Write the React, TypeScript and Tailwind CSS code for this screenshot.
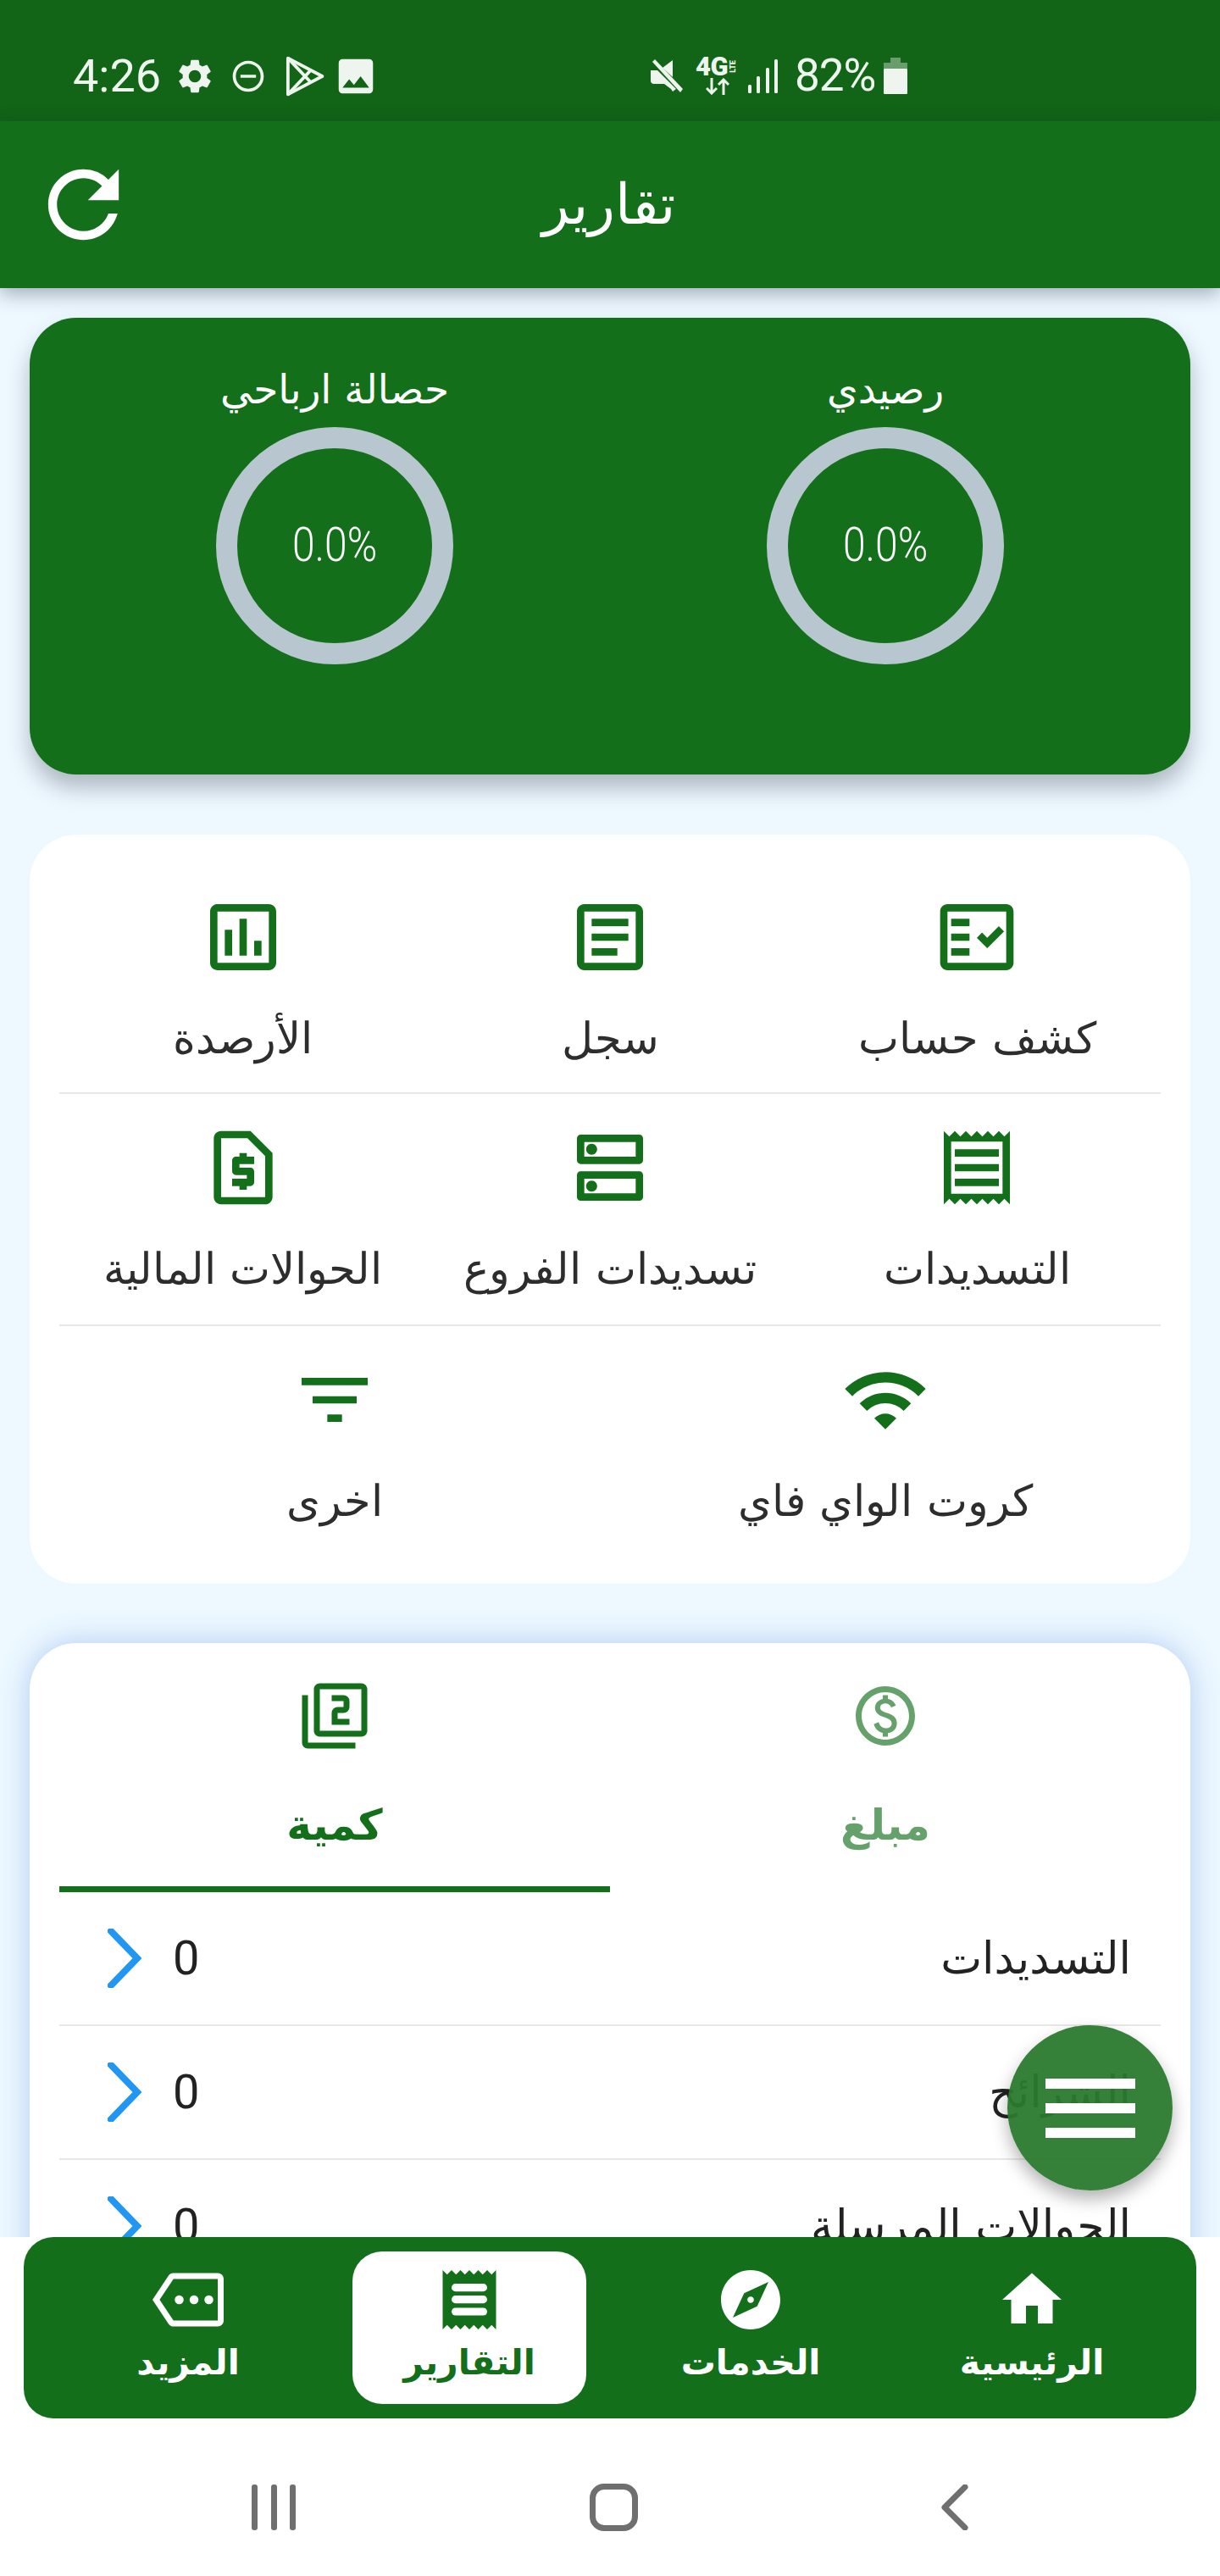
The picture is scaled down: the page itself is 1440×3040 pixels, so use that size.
import {
  MdRefresh,
  MdSettings,
  MdOutlineDoNotDisturbOn,
  MdImage,
  MdOutlineFactCheck,
  MdOutlineArticle,
  MdOutlineAssessment,
  MdOutlineReceipt,
  MdOutlineDns,
  MdOutlineRequestPage,
  MdWifi,
  MdFilterList,
  MdOutlinePaid,
  MdOutlineFilter2,
  MdHome,
  MdExplore,
  MdOutlineMore,
} from 'react-icons/md'

const services = [
  { label: 'كشف حساب', Icon: MdOutlineFactCheck },
  { label: 'سجل', Icon: MdOutlineArticle },
  { label: 'الأرصدة', Icon: MdOutlineAssessment },
  { label: 'التسديدات', Icon: MdOutlineReceipt },
  { label: 'تسديدات الفروع', Icon: MdOutlineDns },
  { label: 'الحوالات المالية', Icon: MdOutlineRequestPage },
]

const rows = ['التسديدات', 'الشرائح', 'الحوالات المرسلة']

// receipt with thick rounded bars, the md one is too thin here
function ReceiptIcon({ size }: { size: number }) {
  return (
    <svg viewBox="0 0 24 24" width={size} height={size} fill="currentColor">
      <path d="M3 22l1.5-1.5L6 22l1.5-1.5L9 22l1.5-1.5L12 22l1.5-1.5L15 22l1.5-1.5L18 22l1.5-1.5L21 22V2l-1.5 1.5L18 2l-1.5 1.5L15 2l-1.5 1.5L12 2l-1.5 1.5L9 2 7.5 3.5 6 2 4.5 3.5 3 2v20z" />
      <rect x="6" y="6.6" width="12" height="2.6" rx="1.3" fill="#fff" />
      <rect x="6" y="10.6" width="12" height="2.6" rx="1.3" fill="#fff" />
      <rect x="6" y="14.7" width="12" height="2.6" rx="1.3" fill="#fff" />
    </svg>
  )
}

function StatusBar() {
  return (
    <div dir="ltr" className="h-[143px] bg-[#126417] flex items-center pt-[36px] pl-[86px] text-[#eef5ee] font-['Roboto',sans-serif]">
      <span className="text-[54px] leading-none w-[120px]">4:26</span>
      <MdSettings size={48} />
      <MdOutlineDoNotDisturbOn size={44} className="ml-[17px]" />
      <svg viewBox="0 0 24 24" className="w-[54px] h-[54px] ml-[17px]" fill="none" stroke="currentColor" strokeWidth="1.7" strokeLinejoin="round">
        <path d="M3.5 2.5L21.5 12L3.5 21.5Z" />
        <path d="M3.5 2.5L15.5 15.2M3.5 21.5L15.5 8.8" />
      </svg>
      <MdImage size={54} className="ml-[7px]" />
      <svg viewBox="0 0 38 40" className="w-[38px] h-[40px] ml-[321px]" fill="currentColor">
        <path d="M0 13h8L30 35 26 38 24 35 16 29H4q-4 0-4-4Z" />
        <path d="M2 3l3-3 33 35-3 4Z" />
        <path d="M26 1v20L14 10Z" />
      </svg>
      <div className="relative w-[52px] h-[44px] ml-[15px] font-black">
        <span className="absolute left-0 top-[-4px] text-[31px] leading-[30px] tracking-[-0.5px]">4G</span>
        <span className="absolute left-[37px] top-[6px] text-[9px] leading-[9px] origin-center -rotate-90">LTE</span>
        <svg viewBox="0 0 28 20" className="absolute left-[12px] top-[24px] w-[28px] h-[20px]" fill="none" stroke="currentColor" strokeWidth="3">
          <path d="M7 0v18M1 12l6 6 6-6M21 20V2M15 8l6-6 6 6" />
        </svg>
      </div>
      <svg viewBox="0 0 35 40" className="w-[35px] h-[40px] ml-[10px]" fill="currentColor">
        <rect x="0" y="30" width="4" height="10" rx="1.5" />
        <rect x="10" y="20" width="4" height="20" rx="1.5" />
        <rect x="21" y="10" width="4" height="30" rx="1.5" />
        <rect x="31" y="0" width="4" height="40" rx="1.5" />
      </svg>
      <span className="text-[53px] leading-none ml-[20px] w-[105px] tracking-[-1px]">82%</span>
      <svg viewBox="0 0 28 43" className="w-[28px] h-[43px]">
        <path d="M8 0h12v6h8v7H0V6h8Z" fill="#eef5ee" opacity="0.4" />
        <rect x="0" y="13" width="28" height="30" rx="1" fill="#eef5ee" />
      </svg>
    </div>
  )
}

function AppBar() {
  return (
    <div className="relative z-10 h-[197px] bg-[#146f1b] shadow-[0_6px_22px_rgba(30,40,60,0.38)] flex items-center justify-center text-white">
      <MdRefresh size={125} className="absolute left-[36px] top-[36px]" />
      <h1 className="text-[66px] leading-none font-light mr-[4px]">تقارير</h1>
    </div>
  )
}

function Ring({ label }: { label: string }) {
  return (
    <div className="flex flex-col items-center">
      <div className="h-[90px] flex items-center text-[47px] leading-none">{label}</div>
      <div className="w-[280px] h-[280px] rounded-full border-[25px] border-[#b8c7cf] flex items-center justify-center">
        <span dir="ltr" className="font-['Roboto',sans-serif] font-light text-[48px] leading-none scale-y-[1.15]">0.0%</span>
      </div>
    </div>
  )
}

function BalanceCard() {
  return (
    <div className="h-[539px] rounded-[55px] bg-[#146f1b] text-white px-[35px] pt-[39px] grid grid-cols-2 items-start shadow-[0_16px_26px_rgba(60,70,80,0.35)]">
      <Ring label="رصيدي" />
      <Ring label="حصالة ارباحي" />
    </div>
  )
}

function ServiceItem({ label, Icon }: { label: string; Icon: typeof MdWifi }) {
  return (
    <div className="flex flex-col items-center pt-[35px]">
      <Icon size={104} className="text-[#146f1b]" />
      <div className="mt-[32px] h-[70px] flex items-center text-[51px] leading-none text-[#2d2d2d] font-light whitespace-nowrap">{label}</div>
    </div>
  )
}

function ServicesCard() {
  return (
    <div className="h-[884px] rounded-[55px] bg-white px-[35px] pt-[2px] mt-[71px]">
      <div className="grid grid-cols-3 h-[304px] pt-[32px] border-b-2 border-[#e8e8e8]">
        {services.slice(0, 3).map((s) => (
          <ServiceItem key={s.label} {...s} />
        ))}
      </div>
      <div className="grid grid-cols-3 h-[274px] border-b-2 border-[#e8e8e8]">
        {services.slice(3).map((s) => (
          <ServiceItem key={s.label} {...s} />
        ))}
      </div>
      <div className="grid grid-cols-2">
        <ServiceItem label="كروت الواي فاي" Icon={MdWifi} />
        <ServiceItem label="اخرى" Icon={MdFilterList} />
      </div>
    </div>
  )
}

function TabsCard() {
  return (
    <div className="rounded-t-[55px] h-[900px] bg-white px-[35px] mt-[70px] shadow-[0_0_34px_rgba(165,195,240,0.85)]">
      <div className="grid grid-cols-2 h-[294px]">
        <div className="flex flex-col items-center pt-[44px] text-[#146f1b] opacity-65">
          <MdOutlinePaid size={84} />
          <div className="mt-[52px] text-[50px] leading-[70px] font-bold">مبلغ</div>
        </div>
        <div className="flex flex-col items-center pt-[44px] text-[#146f1b] border-b-[7px] border-[#146f1b]">
          <MdOutlineFilter2 size={84} />
          <div className="mt-[52px] text-[50px] leading-[70px] font-bold">كمية</div>
        </div>
      </div>
      {rows.map((r) => (
        <div key={r} className="h-[158px] border-b-2 border-[#e8e8e8] flex items-center justify-between pr-[35px] pl-[57px]">
          <span className="text-[52px] leading-none text-[#222]">{r}</span>
          <div dir="ltr" className="flex items-center gap-[37px]">
            <svg viewBox="0 0 40 70" className="w-[40px] h-[70px]" fill="none" stroke="#2196f3" strokeWidth="8" strokeLinecap="square">
              <path d="M4 3L35 35L4 67" />
            </svg>
            <span className="font-['Roboto',sans-serif] text-[56px] leading-none text-[#222]">0</span>
          </div>
        </div>
      ))}
    </div>
  )
}

function BottomNav() {
  const items = [
    { label: 'الرئيسية', icon: <MdHome size={84} /> },
    { label: 'الخدمات', icon: <MdExplore size={84} /> },
    { label: 'التقارير', icon: <ReceiptIcon size={84} />, active: true },
    { label: 'المزيد', icon: <MdOutlineMore size={84} /> },
  ]
  return (
    <div className="mx-[28px] h-[214px] rounded-[35px] bg-[#146f1b] px-[28px] py-[17px] grid grid-cols-4">
      {items.map(({ label, icon, active }) => (
        <div
          key={label}
          className={
            active
              ? 'mx-[28px] rounded-[35px] bg-white text-[#146f1b] flex flex-col items-center pt-[15px]'
              : 'mx-[28px] text-white flex flex-col items-center pt-[15px]'
          }
        >
          {icon}
          <div className="text-[41px] leading-[64px] font-bold whitespace-nowrap">{label}</div>
        </div>
      ))}
    </div>
  )
}

function SystemNav() {
  return (
    <div dir="ltr" className="h-[185px] flex items-center pt-[25px] text-[#6f6f6f]">
      <svg viewBox="0 0 52 54" className="w-[52px] h-[54px] ml-[297px]" fill="currentColor">
        <rect x="0" y="0" width="7" height="54" rx="3" />
        <rect x="23" y="0" width="7" height="54" rx="3" />
        <rect x="45" y="0" width="7" height="54" rx="3" />
      </svg>
      <div className="w-[57px] h-[56px] ml-[347px] rounded-[17px] border-[7px] border-[#6f6f6f]" />
      <svg viewBox="0 0 32 54" className="w-[32px] h-[54px] ml-[358px]" fill="none" stroke="currentColor" strokeWidth="7" strokeLinecap="round" strokeLinejoin="round">
        <path d="M28 3L4 27L28 51" />
      </svg>
    </div>
  )
}

export default function App() {
  return (
    <div dir="rtl" className="w-[1440px] h-[3040px] flex flex-col overflow-hidden bg-white font-['DejaVu_Sans',sans-serif]">
      <StatusBar />
      <AppBar />
      <main className="relative h-[2300px] overflow-hidden bg-[#edf8ff] px-[35px] pt-[35px]">
        <BalanceCard />
        <ServicesCard />
        <TabsCard />
        <button className="absolute right-[56px] bottom-[55px] w-[195px] h-[195px] rounded-full bg-[#2a7a2f]/95 shadow-[0_10px_20px_rgba(0,0,0,0.3)] flex flex-col items-center justify-center gap-[17px]">
          <span className="w-[106px] h-[12px] bg-white" />
          <span className="w-[106px] h-[12px] bg-white" />
          <span className="w-[106px] h-[12px] bg-white" />
        </button>
      </main>
      <div className="flex-1 bg-white">
        <BottomNav />
        <SystemNav />
      </div>
    </div>
  )
}
